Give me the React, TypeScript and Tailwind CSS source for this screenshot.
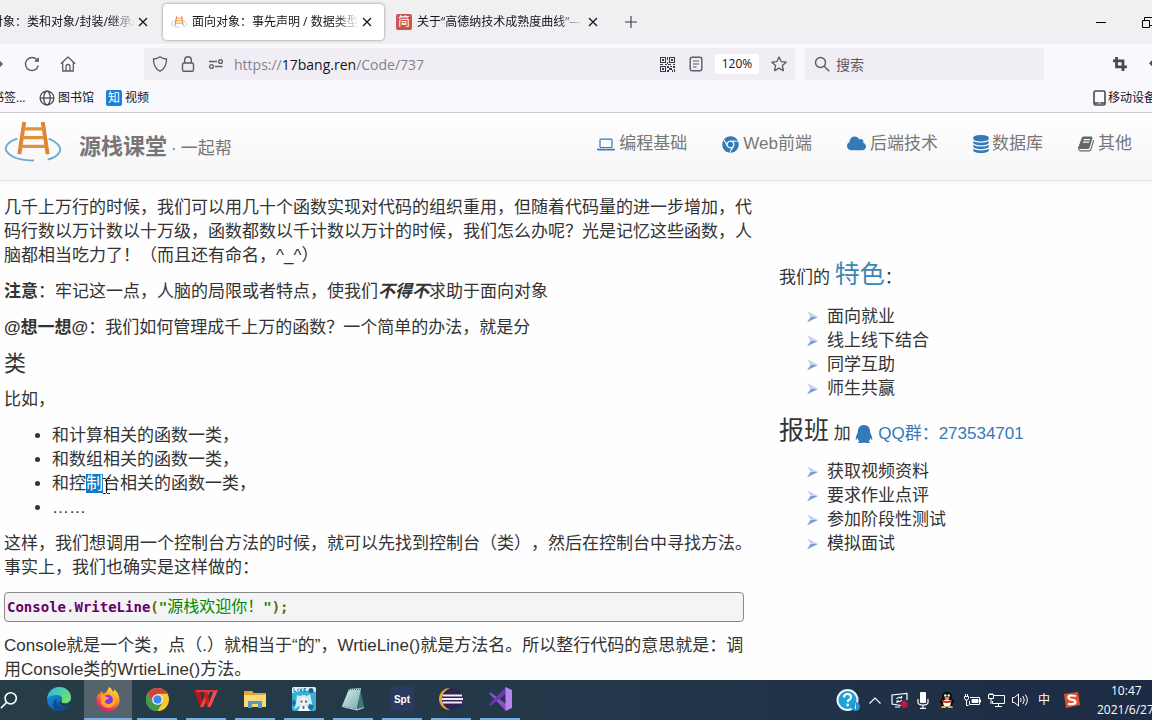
import React from "react";
import { FaChrome, FaQq } from "react-icons/fa";

const UI = "font-['Open_Sans','Noto_Sans_CJK_SC',sans-serif]";
const BODY = "font-['Liberation_Sans','Noto_Sans_CJK_SC',sans-serif]";

type IconProps = { className?: string };

/* ---------- small line icons ---------- */

function Cross() {
  return (
    <svg viewBox="0 0 10 10" className="size-[10px]" fill="none" stroke="#15141a" strokeWidth="1.2">
      <path d="M1 1l8 8M9 1l-8 8" />
    </svg>
  );
}

function Ladder({ className }: IconProps) {
  return (
    <svg viewBox="0 0 58 44" className={className} fill="none">
      <path d="M13 18C5 20-1 26 2 31c4 6 14 9.500 28 9.500" stroke="#6badd3" strokeWidth="2" />
      <path d="M45 18c9 4 14 9 11 14-2 4-6 6-12 7.500" stroke="#6badd3" strokeWidth="2" />
      <path d="M20 1l-5 33M39 1l5 33" stroke="#df8431" strokeWidth="4" />
      <path d="M19 8h21M18 17h23M17 26h25" stroke="#e38f40" strokeWidth="3.400" />
    </svg>
  );
}

function Shield() {
  return (
    <svg viewBox="0 0 16 16" className="size-4" fill="none" stroke="#5b5b66" strokeWidth="1.3">
      <path d="M8 .8c2 1.500 4.300 2.100 6.600 2.200 0 5.500-1.500 9.700-6.600 12.200C2.900 12.700 1.400 8.500 1.400 3 3.700 2.900 6 2.300 8 .8z" strokeLinejoin="round" />
    </svg>
  );
}

function Lock() {
  return (
    <svg viewBox="0 0 16 16" className="size-4" fill="none" stroke="#5b5b66" strokeWidth="1.4">
      <rect x="2.500" y="7" width="11" height="8.300" rx="1.500" />
      <path d="M4.700 7V4a3.300 3.300 0 016.600 0v3" />
    </svg>
  );
}

function Permissions() {
  return (
    <svg viewBox="0 0 16 16" className="size-4" fill="none" stroke="#5b5b66" strokeWidth="1.3">
      <path d="M1 5.500h8M7 10.500h7.500" />
      <circle cx="12.500" cy="5.500" r="1.900" />
      <circle cx="3.500" cy="10.500" r="1.900" />
    </svg>
  );
}

function Reload() {
  return (
    <svg viewBox="0 0 16 16" className="size-4" fill="none" stroke="#5b5b66" strokeWidth="1.4">
      <path d="M14.300 9.500A6.500 6.500 0 1112.800 3.600L14.500 5.300" />
      <path d="M14.800 1v4.800H10z" fill="#5b5b66" stroke="none" />
    </svg>
  );
}

function Home() {
  return (
    <svg viewBox="0 0 16 16" className="size-4" fill="none" stroke="#5b5b66" strokeWidth="1.3" strokeLinejoin="round">
      <path d="M.8 7.800L8 1l7.200 6.800M2.700 6.500V15h10.600V6.500" />
      <path d="M6 15v-4.500a2 2 0 014 0V15" />
    </svg>
  );
}

function QrCode() {
  return (
    <svg viewBox="0 0 15 15" className="size-[15px]" fill="#3a3944">
      <path fillRule="evenodd" d="M0 0h6v6H0zM1 1v4h4V1zM9 0h6v6H9zM10 1v4h4V1zM0 9h6v6H0zM1 10v4h4v-4z" />
      <path d="M2 2h2v2H2zM11 2h2v2h-2zM2 11h2v2H2zM7 0h1v3H7zM7 5h1v2H7zM0 7h3v1H0zM5 7h2v1H5zM8 7h3v1H8zM13 7h2v1h-2zM7 9h2v2H7zM10 9h2v1h-2zM13 9h2v2h-2zM9 11h3v2H9zM7 13h2v2H7zM12 13h1v2h-1zM14 12h1v3h-1z" />
    </svg>
  );
}

function Reader() {
  return (
    <svg viewBox="0 0 14 16" className="h-4 w-[14px]" fill="none" stroke="#5b5b66" strokeWidth="1.400">
      <rect x="1.200" y="1.200" width="11.600" height="13.600" rx="2" />
      <path d="M4 5h6M4 8h6M4 11h3.500" strokeWidth="1.200" />
    </svg>
  );
}

function Star() {
  return (
    <svg viewBox="0 0 16 16" className="size-4" fill="none" stroke="#5b5b66" strokeWidth="1.300" strokeLinejoin="round">
      <path d="M8 1l2.100 4.600 5 .6-3.700 3.400 1 5L8 12.100l-4.400 2.500 1-5L.9 6.200l5-.6z" />
    </svg>
  );
}

function Lens({ className, color }: { className?: string; color: string }) {
  return (
    <svg viewBox="0 0 16 16" className={className} fill="none" stroke={color} strokeWidth="1.400">
      <circle cx="6.500" cy="6.500" r="5" />
      <path d="M10.200 10.200l5 5" />
    </svg>
  );
}

function CropMark() {
  return (
    <svg viewBox="0 0 14 14" className="size-[14px]" fill="none" stroke="#4a4955" strokeWidth="2.800">
      <path d="M3.500 0v9.800H14M0 3.800h10V14" />
    </svg>
  );
}

function Globe() {
  return (
    <svg viewBox="0 0 16 16" className="size-4" fill="none" stroke="#4a4955" strokeWidth="1.300">
      <circle cx="8" cy="8" r="6.900" />
      <ellipse cx="8" cy="8" rx="3.200" ry="6.900" />
      <path d="M1.200 8h13.600" />
    </svg>
  );
}

/* ---------- navigation glyphs ---------- */

function Laptop() {
  return (
    <svg viewBox="0 0 1920 1792" className="h-[17px] w-[18px]" fill="#337ab7">
      <path d="M416 1280q-66 0-113-47t-47-113v-704q0-66 47-113t113-47h1088q66 0 113 47t47 113v704q0 66-47 113t-113 47h-1088zm-32-864v704q0 13 9.500 22.500t22.500 9.500h1088q13 0 22.500-9.500t9.500-22.500v-704q0-13-9.500-22.500t-22.500-9.500h-1088q-13 0-22.500 9.500t-9.500 22.500zm1376 928h160v96q0 40-47 68t-113 28h-1600q-66 0-113-28t-47-68v-96h1760zm-720 96q16 0 16-16t-16-16h-160q-16 0-16 16t16 16h160z" />
    </svg>
  );
}

function Cloud() {
  return (
    <svg viewBox="0 0 1920 1792" className="h-[18px] w-[19px]" fill="#337ab7">
      <path d="M1920 1152q0 159-112.500 271.500t-271.500 112.500h-1088q-185 0-316.500-131.500t-131.500-316.500q0-132 71-241.500t187-163.500q-2-28-2-43 0-212 150-362t362-150q158 0 286.500 88t187.500 230q70-62 166-62 106 0 181 75t75 181q0 75-41 138 129 30 213 134.500t84 239.500z" />
    </svg>
  );
}

function Database() {
  return (
    <svg viewBox="0 0 1536 1792" className="h-[18px] w-4" fill="#337ab7">
      <path d="M768 768q237 0 443-43t325-127v170q0 69-103 128t-280 93.500-385 34.500-385-34.500-280-93.500-103-128v-170q119 84 325 127t443 43zm0 768q237 0 443-43t325-127v170q0 69-103 128t-280 93.500-385 34.500-385-34.500-280-93.500-103-128v-170q119 84 325 127t443 43zm0-384q237 0 443-43t325-127v170q0 69-103 128t-280 93.500-385 34.500-385-34.500-280-93.500-103-128v-170q119 84 325 127t443 43zm0-1152q208 0 385 34.500t280 93.500 103 128v128q0 69-103 128t-280 93.500-385 34.500-385-34.500-280-93.500-103-128v-128q0-69 103-128t280-93.500 385-34.500z" />
    </svg>
  );
}

function Book() {
  return (
    <svg viewBox="0 0 1664 1792" className="h-[18px] w-4" fill="#666">
      <path d="M1639 478q40 57 18 129l-275 906q-19 64-76.500 107.500t-122.500 43.500h-923q-77 0-148.500-53.500t-99.500-131.500q-24-67-2-127 0-4 3-27t4-37q1-8-3-21.500t-3-19.500q2-11 8-21t16.500-23.500 16.500-23.500q23-38 45-91.500t30-91.500q3-10 .5-30t-.5-28q3-11 17-28t17-23q21-36 42-92t25-90q1-9-2.500-32t.5-28q4-13 22-30.500t22-22.500q19-26 42.500-84.500t27.500-96.500q1-8-3-25.500t-2-26.500q2-8 9-18t18-23 17-21q8-12 16.500-30.500t15-35 16-36 19.500-32 26.500-23.500 36-11.500 47.500 5.500l-1 3q38-9 51-9h761q74 0 114 56t18 130l-274 906q-36 119-71.500 153.500t-128.500 34.500h-869q-27 0-38 15-11 16-1 43 24 70 144 70h923q29 0 56-15.500t35-41.500l300-987q7-22 5-57 38 15 59 43zm-1064 2q-4 13 2 22.500t20 9.500h608q13 0 25.500-9.500t16.500-22.500l21-64q4-13-2-22.500t-20-9.500h-608q-13 0-25.500 9.500t-16.500 22.500zm-83 256q-4 13 2 22.500t20 9.500h608q13 0 25.500-9.500t16.500-22.500l21-64q4-13-2-22.500t-20-9.500h-608q-13 0-25.500 9.500t-16.500 22.500z" />
    </svg>
  );
}

/* ---------- browser chrome ---------- */

const FADE = "min-w-0 flex-1 overflow-hidden whitespace-nowrap [mask-image:linear-gradient(to_right,black_calc(100%-24px),transparent)]";

function TabStrip() {
  return (
    <div className="flex h-11 items-center bg-[#f0eff1] text-[12px] text-[#15141a]">
      <div className="flex w-[148px] items-center gap-[2px]">
        <div className={FADE}>
          <span className="-ml-[33px]">面向对象：类和对象/封装/继承/</span>
        </div>
        <button aria-label="关闭标签页" className="p-[1px] pr-0"><Cross /></button>
      </div>
      <div className="ml-[15px] flex h-9 w-[221px] items-center rounded-[4px] bg-white px-2 pr-3 shadow-[0_0_3px_rgba(0,0,0,0.45)]">
        <Ladder className="mr-[5px] h-3 w-4 shrink-0" />
        <div className={FADE}>面向对象：事先声明 / 数据类型</div>
        <button aria-label="关闭标签页" className="ml-[3px]"><Cross /></button>
      </div>
      <div className="ml-[12px] flex w-[202px] items-center">
        <span className="mr-[5px] flex size-4 shrink-0 items-center justify-center rounded-[2px] bg-[#cd5550] text-[12px] leading-4 text-white">简</span>
        <div className={FADE}>关于“高德纳技术成熟度曲线”—</div>
        <button aria-label="关闭标签页" className="ml-[6px]"><Cross /></button>
      </div>
      <button aria-label="新建标签页" className="ml-[27px]">
        <svg viewBox="0 0 12 12" className="size-3" stroke="#3a3944" strokeWidth="1.100"><path d="M6 0v12M0 6h12" /></svg>
      </button>
      <div className="ml-auto flex items-center gap-9 overflow-hidden">
        <button aria-label="最小化">
          <svg viewBox="0 0 10 10" className="size-[10px]" stroke="#000"><path d="M0 5.500h10" /></svg>
        </button>
        <button aria-label="还原" className="w-[10px] overflow-hidden">
          <svg viewBox="0 0 11 11" className="size-[11px]" fill="none" stroke="#000"><path d="M.5 3.500h7v7h-7zM2.500 3.500v-3h8v8h-3" /></svg>
        </button>
      </div>
    </div>
  );
}

function Toolbar() {
  return (
    <div className="flex h-10 items-center">
      <button aria-label="前进" className="w-1 overflow-hidden">
        <svg viewBox="0 0 4 12" className="h-3 w-1" fill="none" stroke="#5b5b66" strokeWidth="1.500"><path d="M-3 1l5 5-5 5M-3 6h5" /></svg>
      </button>
      <button aria-label="重新载入" className="ml-5"><Reload /></button>
      <button aria-label="主页" className="ml-5"><Home /></button>
      <div className="ml-[68px] flex h-8 min-w-0 flex-[635] items-center rounded-[3px] bg-[#f0eef4] px-2">
        <Shield />
        <span className="ml-3"><Lock /></span>
        <span className="ml-3"><Permissions /></span>
        <span className="ml-[10px] flex-1 text-[14px] text-[#83828c]">
          https://<span className="text-[#15141a]">17bang.ren</span>/Code/737
        </span>
        <QrCode />
        <span className="ml-[14px]"><Reader /></span>
        <button className="mx-3 h-5 w-11 rounded-[3px] bg-white text-[12px] leading-5 text-[#15141a]">120%</button>
        <button aria-label="添加书签"><Star /></button>
      </div>
      <label className="ml-[10px] flex h-8 min-w-0 flex-[230] items-center rounded-[3px] bg-[#f0eef4] pl-[9px]">
        <Lens className="mr-[6px] size-4 shrink-0" color="#5b5b66" />
        <input aria-label="搜索" placeholder="搜索" className="w-full min-w-0 bg-transparent text-[14px] outline-none placeholder:text-[#5b5b66]" />
      </label>
      <button aria-label="截图" className="ml-[69px]"><CropMark /></button>
      <button aria-label="撤销" className="ml-[22px]">
        <svg viewBox="0 0 4 12" className="h-3 w-[3px]" fill="#4a4955"><path d="M0 5l4-4v8z" /></svg>
      </button>
    </div>
  );
}

function Bookmarks() {
  return (
    <div className="flex h-[29px] items-center overflow-hidden whitespace-nowrap border-b border-[#cccbd2] text-[12px] text-[#15141a]">
      <a href="#b" className="w-[39px] overflow-hidden"><span className="-ml-2">书签...</span></a>
      <a href="#lib" className="flex items-center gap-[3px]"><Globe />图书馆</a>
      <a href="#video" className="ml-3 flex items-center gap-[3px]">
        <span className="flex size-4 items-center justify-center rounded-[2px] bg-[#1b7fdc] text-[12px] leading-4 text-white">知</span>视频
      </a>
      <a href="#mobile" className="ml-auto flex w-[59px] items-center gap-[2px] overflow-hidden">
        <svg viewBox="0 0 13 16" className="h-4 w-[13px] shrink-0" fill="none" stroke="#4a4955" strokeWidth="1.600">
          <rect x="1" y="1" width="11" height="14" rx="1.500" />
          <path d="M1 13h11" /><path d="M5.500 13h2" stroke="#fff" strokeWidth="1" />
        </svg>
        移动设备
      </a>
    </div>
  );
}

/* ---------- web page ---------- */

function NavItem({ icon, label, gap }: { icon: React.ReactNode; label: string; gap: string }) {
  return <a href="#nav" className={`flex items-center ${gap}`}>{icon}<span>{label}</span></a>;
}

function SiteHeader() {
  return (
    <header className="flex h-[68px] shrink-0 items-start border-b border-[#e6dfea] bg-linear-to-b from-white to-[#f6f5f7] pr-5 text-[17px] leading-6 text-[#777] shadow-[0_1px_4px_rgba(0,0,0,0.06)]">
      <a href="#home" className="flex items-start pl-1">
        <Ladder className="mt-[8px] h-[43px] w-[58px]" />
        <span className="mt-[22px] ml-[17px] flex items-baseline gap-1">
          <b className="text-[22px]">源栈课堂</b><span>·</span><span>一起帮</span>
        </span>
      </a>
      <nav className="mt-[19px] ml-auto flex gap-[35px]">
        <NavItem icon={<Laptop />} label="编程基础" gap="gap-1" />
        <NavItem icon={<FaChrome className="size-[17px] text-[#337ab7]" />} label="Web前端" gap="gap-1" />
        <NavItem icon={<Cloud />} label="后端技术" gap="gap-1" />
        <NavItem icon={<Database />} label="数据库" gap="gap-[3px]" />
        <NavItem icon={<Book />} label="其他" gap="gap-1" />
      </nav>
    </header>
  );
}

function Article() {
  return (
    <article className="flex flex-col gap-3">
      <p>几千上万行的时候，我们可以用几十个函数实现对代码的组织重用，但随着代码量的进一步增加，代码行数以万计数以十万级，函数都数以千计数以万计的时候，我们怎么办呢？光是记忆这些函数，人脑都相当吃力了！（而且还有命名，^_^）</p>
      <p><b>注意</b>：牢记这一点，人脑的局限或者特点，使我们<b><i>不得不</i></b>求助于面向对象</p>
      <p><b>@想一想@</b>：我们如何管理成千上万的函数？一个简单的办法，就是分</p>
      <h4 className="text-[22px]">类</h4>
      <p>比如，</p>
      <ul className="list-disc pl-12">
        <li>和计算相关的函数一类，</li>
        <li>和数组相关的函数一类，</li>
        <li>
          和控
          <span className="relative bg-[#0f7ac8] text-white">
            制
            <svg viewBox="0 0 7 16" className="absolute top-1 left-[17px] h-4 w-[7px]" fill="none" stroke="#111">
              <path d="M0 .5h2.500l1 1 1-1H7M3.500 1v14M0 15.500h2.500l1-1 1 1H7" />
            </svg>
          </span>
          台相关的函数一类，
        </li>
        <li>……</li>
      </ul>
      <p>这样，我们想调用一个控制台方法的时候，就可以先找到控制台（类），然后在控制台中寻找方法。事实上，我们也确实是这样做的：</p>
      <pre className="mr-[10px] rounded-[4px] border border-[#888] bg-[#f4f4f6] px-[2px] font-['DejaVu_Sans_Mono','Noto_Sans_CJK_SC',monospace] text-[14px] leading-7 font-bold text-[#660066]">
        Console<span className="text-[#666600]">.</span>WriteLine<span className="text-[#666600]">(</span>
        <span className="text-[#008800]">"<span className="text-[16px] leading-4 font-normal">源栈欢迎你！</span>"</span>
        <span className="text-[#666600]">);</span>
      </pre>
      <p>Console就是一个类，点（.）就相当于“的”，WrtieLine()就是方法名。所以整行代码的意思就是：调用Console类的WrtieLine()方法。</p>
    </article>
  );
}

function ArrowList({ items }: { items: string[] }) {
  return (
    <ul className="pl-7">
      {items.map((t) => (
        <li key={t} className="flex items-center gap-[9px]">
          <svg viewBox="0 0 11 12" className="h-3 w-[11px]">
            <path d="M0 0l11 6H3.500z" fill="#c3d4f3" />
            <path d="M0 11.500L11 6H3.500z" fill="#7d9cd6" />
          </svg>
          {t}
        </li>
      ))}
    </ul>
  );
}

function Sidebar() {
  return (
    <aside className="pt-[58px]">
      <p className="h-[51px] leading-10">我们的 <a href="#f" className="text-[25px] text-[#3d86b4]">特色</a>：</p>
      <ArrowList items={["面向就业", "线上线下结合", "同学互助", "师生共赢"]} />
      <p className="mt-[9px] h-[50px] leading-10">
        <span className="text-[25px]">报班</span> 加 <a href="#qq" className="text-[#337ab7]"><FaQq className="inline size-[18px] -translate-y-px scale-x-110" /> QQ群：273534701</a>
      </p>
      <ArrowList items={["获取视频资料", "要求作业点评", "参加阶段性测试", "模拟面试"]} />
    </aside>
  );
}

/* ---------- taskbar ---------- */

function Edge() {
  return (
    <svg viewBox="0 0 24 24" className="size-6">
      <defs>
        <linearGradient id="eg" x1="0" y1="0" x2="1" y2=".6"><stop offset="0" stopColor="#2fb1e8" /><stop offset="1" stopColor="#6fe36b" /></linearGradient>
        <linearGradient id="eb" x1="0" y1="0" x2=".6" y2="1"><stop offset="0" stopColor="#1c9be0" /><stop offset="1" stopColor="#0d59b0" /></linearGradient>
      </defs>
      <circle cx="12" cy="12" r="12" fill="url(#eb)" />
      <path d="M.4 11C1.500 4.500 6.500 0 12.500 0 19 0 24 5 24 10.500c0 4-3 6-6 6-2.500 0-4-1-3.500-2 2-3 0-6.500-4.500-6.500C5.500 8 2 9 .4 11z" fill="url(#eg)" />
      <path d="M9.500 12c-1 6 5 10 12.500 6-2 3.500-6 6-10 6-5 0-7-5-5.500-8.500C7.200 13.700 8 12.700 9.500 12z" fill="#114a8b" />
      <path d="M14.500 14.500c-.5 1 1 2 3.500 2 2 0 4-.8 5.200-2.500l.8 1.500-2 3c-5 2-10 0-10.500-4 1 .5 2 .5 3 0z" fill="#263c46" />
    </svg>
  );
}

function Firefox() {
  return (
    <svg viewBox="0 0 24 24" className="size-6">
      <defs>
        <linearGradient id="ff" x1=".8" y1="0" x2=".3" y2="1"><stop offset="0" stopColor="#fff04a" /><stop offset=".4" stopColor="#ff9a26" /><stop offset=".75" stopColor="#ff3b50" /><stop offset="1" stopColor="#e31587" /></linearGradient>
      </defs>
      <path d="M13 0c2 1 3.500 3 4 5 1-.5 1-1.500 1-2.500 3 2 5.500 6 5.500 10.500C23.500 19 18.500 24 12 24S.5 19 .5 13c0-3 1-5.500 2.500-7.500V8C4 6.500 5 6 5 4l2.500 2.500C9.500 6 11 5 13 0z" fill="url(#ff)" />
      <circle cx="12" cy="13" r="5" fill="#7a3ce0" />
      <path d="M4.500 8.500c2-1 4.500 0 5.500 1.500 1 0 3 0 3 1-1 2-3 1-4 3 0 3 4 4 6.500 2 2-1.500 2-5 0-7 4 1 5.500 6 2.500 9.500-4 4-11 2.500-13-2z" fill="#ffa62b" />
    </svg>
  );
}

function Chrome() {
  return (
    <svg viewBox="0 0 24 24" className="size-[23px]">
      <circle cx="12" cy="12" r="12" fill="#fcc934" />
      <path d="M1.600 6A12 12 0 0122.400 6H12L6.800 15z" fill="#c9463d" />
      <path d="M1.600 6A12 12 0 0012 24l5.200-9H6.800z" fill="#3d9b4f" />
      <circle cx="12" cy="12" r="5.600" fill="#fff" />
      <circle cx="12" cy="12" r="4.400" fill="#4285f4" />
    </svg>
  );
}

function Wps() {
  return (
    <svg viewBox="0 0 24 20" className="h-5 w-6">
      <path d="M0 1h6l3.500 17H6z" fill="#b3161b" /><path d="M6 18L13 2h3L9.500 18z" fill="#f04a43" />
      <path d="M9 1h4l3.500 17H13z" fill="#c81d21" /><path d="M13.500 18L20 1h4l-7.500 17z" fill="#f2504a" />
      <path d="M2 1h21l-.8 2H2.400z" fill="#e23a35" />
    </svg>
  );
}

function Folder() {
  return (
    <svg viewBox="0 0 22 19" className="h-[19px] w-[22px]">
      <path d="M0 1h8l2 2h12v4H0z" fill="#dda836" /><path d="M0 5h22v12H0z" fill="#fbd978" />
      <path d="M4 11h14v7h-4v-4H8v4H4z" fill="#519bc4" />
    </svg>
  );
}

function Live() {
  return (
    <svg viewBox="0 0 24 24" className="size-6">
      <rect width="24" height="24" rx="2" fill="#35b1d3" />
      <path d="M0 2q0-2 2-2h20q2 0 2 2v3Q12 2 0 6z" fill="#d9f3fa" />
      <path d="M2 1.500v3h2M6 1.500v3M8 1.500l1 3 1-3M14 1.500h-2v3h2M12 3h2" fill="none" stroke="#26809c" />
      <circle cx="19" cy="3.500" r="2.500" fill="#2c5b78" />
      <path d="M5 8l3 1q4-2 7 0l3-2 2 9q2 3-1 5l-4-2H7l-4 3q-2-4 1-6z" fill="#cfeaf5" />
      <path d="M7.500 12q4-3 8 0v4q-4 4-8 0z" fill="#fdf0ee" />
      <path d="M8.500 13.500h2v2h-2zM13 13.500h2v2h-2z" fill="#386a96" />
      <path d="M8 19h7l3 5H6z" fill="#fff" /><path d="M10.500 19h2v3h-2z" fill="#2b7fae" />
      <path d="M17 17l5 1-2 5-4-2zM1 12l3 3-1 5-3-3z" fill="#1f6f9f" />
    </svg>
  );
}

function Notepad() {
  return (
    <svg viewBox="0 0 24 24" className="size-6">
      <defs>
        <linearGradient id="np" x1="0" y1="0" x2="1" y2="1"><stop offset="0" stopColor="#e0f3f0" /><stop offset="1" stopColor="#6fa9a8" /></linearGradient>
      </defs>
      <path d="M19 1l4 19-6 2z" fill="#3d7679" />
      <path d="M8 2l12-1-4 21-15-3z" fill="url(#np)" />
      <path d="M8 3l12-1" stroke="#31595d" strokeDasharray="1 1" />
      <path d="M1 19l15 3 7-2v1l-7 2.500L1 20z" fill="#b8cfcf" />
    </svg>
  );
}

function Eclipse() {
  return (
    <svg viewBox="0 0 24 24" className="size-6">
      <path d="M11 1A11 11 0 0011 23Q3 19 3 12T11 1z" fill="#f0a02c" />
      <circle cx="13.500" cy="12" r="10.500" fill="#2d2353" />
      <path d="M3.500 8.500H23M3 12h21M3.500 15.500H23" stroke="#f1edf8" strokeWidth="1.800" />
    </svg>
  );
}

function VisualStudio() {
  return (
    <svg viewBox="0 0 24 24" className="size-6">
      <path d="M1 6.500l2-1L18 17v7z" fill="#8a4fc9" /><path d="M1 17.500l2 1L18 7V0z" fill="#6f35b0" />
      <path d="M17.500 0L24 3v18l-6.500 3z" fill="#b883ee" />
    </svg>
  );
}

function Task({ label, children, active, idle }: { label: string; children: React.ReactNode; active?: boolean; idle?: boolean }) {
  return (
    <button aria-label={label} className={`flex h-10 w-12 flex-col items-center ${active ? "bg-[#55646c]" : ""}`}>
      <span className="flex flex-1 items-center">{children}</span>
      <span className={`h-[2px] ${active ? "w-full" : "w-10"} ${idle ? "" : "bg-[#76b0e4]"}`} />
    </button>
  );
}

function Tray({ children }: { children: React.ReactNode }) {
  return <span className="flex w-6 items-center justify-center">{children}</span>;
}

function Taskbar() {
  return (
    <footer className={`flex h-10 shrink-0 items-center overflow-hidden bg-linear-to-r from-[#263c46] via-[#22384a] to-[#1d2a44] text-white ${UI}`}>
      <button aria-label="搜索" className="w-[34px]"><Lens className="size-[18px] -scale-x-100" color="#fff" /></button>
      <div className="ml-[1px] flex gap-[1px]">
        <Task label="Edge" idle><Edge /></Task>
        <Task label="Firefox" active><Firefox /></Task>
        <Task label="Chrome"><Chrome /></Task>
        <Task label="WPS"><Wps /></Task>
        <Task label="文件资源管理器"><Folder /></Task>
        <Task label="Live"><Live /></Task>
        <Task label="记事本"><Notepad /></Task>
        <Task label="Spt">
          <span className="flex size-6 items-center justify-center bg-[#2b3a5e] font-['Liberation_Sans',sans-serif] text-[10px] font-bold">Spt</span>
        </Task>
        <Task label="Eclipse"><Eclipse /></Task>
        <Task label="Visual Studio"><VisualStudio /></Task>
      </div>
      <div className="ml-auto flex items-center">
        <Tray>
          <svg viewBox="0 0 24 24" className="size-6">
            <circle cx="11.500" cy="12" r="11" fill="#eaf6fb" /><circle cx="11.500" cy="12" r="9" fill="#1fa0d6" />
            <path d="M8 9.500q0-3.500 3.500-3.500T15 9.200q0 1.600-1.800 2.600-1.500.8-1.500 2.200" fill="none" stroke="#fff" strokeWidth="2.200" /><circle cx="11.700" cy="17" r="1.400" fill="#fff" />
            <circle cx="19.500" cy="18.500" r="4.500" fill="#2c94cc" /><path d="M19.500 17.500v3.500M19.500 15.500v1" stroke="#fff" />
          </svg>
        </Tray>
        <span className="w-[3px]" />
        <Tray><svg viewBox="0 0 12 7" className="h-[7px] w-3" fill="none" stroke="#fff" strokeWidth="1.200"><path d="M.5 6.500L6 1l5.500 5.500" /></svg></Tray>
        <Tray>
          <svg viewBox="0 0 17 16" className="h-4 w-[17px]" fill="none" stroke="#fff" strokeWidth="1.200">
            <path d="M10 13.500L1 12V3l15-1.500V8M4 15h5" /><path d="M5.500 7q2-2.500 5-1M11 8q-2 2.500-5 1M10.500 4v2h-2M6 11V9h2" />
            <circle cx="13.200" cy="12.300" r="3.600" fill="#c01340" stroke="none" />
          </svg>
        </Tray>
        <Tray>
          <svg viewBox="0 0 12 17" className="h-[17px] w-3" fill="none" stroke="#fff" strokeWidth="1.200">
            <rect x="3" y="0" width="6" height="11" rx="1" fill="#fff" stroke="none" /><path d="M1 7v3.500q0 2.500 5 2.500t5-2.500V7M6 13v3M3 16.300h6" />
          </svg>
        </Tray>
        <Tray>
          <svg viewBox="0 0 16 16" className="size-4">
            <path d="M8 0c4 0 5 3 5 6l2.500 4-1.500 1-1 3H3l-1-3-1.500-1L3 6c0-3 1-6 5-6z" fill="#0b0b0d" />
            <ellipse cx="8" cy="11" rx="3.800" ry="3.800" fill="#fff" /><path d="M3 7.500q5 3 10 0v2q-5 3-10 0z" fill="#d8222a" />
            <circle cx="6.300" cy="3.500" r="1.200" fill="#fff" /><circle cx="9.700" cy="3.500" r="1.200" fill="#fff" />
            <ellipse cx="8" cy="6" rx="2.600" ry="1" fill="#f4a51c" /><path d="M3 14h4v2H2zM9 14h4l1 2H9z" fill="#f4a51c" />
          </svg>
        </Tray>
        <span className="w-px" />
        <Tray>
          <svg viewBox="0 0 17 12" className="h-3 w-[17px]" fill="none" stroke="#fff">
            <path d="M6 3.500h9.500v7H5.500V7M16.500 5.500v3M.5 2.500h4v2q0 1.500-2 1.500t-2-1.500zM1.500 0v2M3.500 0v2M2.500 6v5.500h2" /><path d="M8 5.500h6v3H8z" fill="#fff" />
          </svg>
        </Tray>
        <Tray>
          <svg viewBox="0 0 17 15" className="h-[15px] w-[17px]" fill="none" stroke="#fff">
            <path d="M6 2.500h10.500v8H4.500V8M10.500 10.500v3M7 13.500h7M.5 1.500h5v4h-5zM3 5.500V11M2 1.500V0M4 1.500V0" />
          </svg>
        </Tray>
        <Tray>
          <svg viewBox="0 0 17 14" className="h-[14px] w-[17px]" fill="none" stroke="#fff">
            <path d="M.5 4.500h2l4-3.500v12l-4-3.500h-2zM8.500 5q1.500 2 0 4M10.800 3q3 4 0 8M13.200 1.500q4.200 5.500 0 11" />
          </svg>
        </Tray>
        <Tray><span className="text-[12px]">中</span></Tray>
        <span className="w-1" />
        <Tray>
          <svg viewBox="0 0 16 16" className="size-4">
            <path d="M0 2l14-2 2 13-14 3z" fill="#e2502f" />
            <path d="M12 4Q4 2.500 4.500 5.500q0 2 3.500 2.300t3.500 2.500Q11 13 4 11.800" fill="none" stroke="#fff" strokeWidth="2.200" />
          </svg>
        </Tray>
        <div className="ml-[13px] w-[55px] text-[12px] leading-[19px] whitespace-nowrap">
          <div className="pl-[14px]">10:47</div>
          <div>2021/6/27</div>
        </div>
      </div>
    </footer>
  );
}

export default function App() {
  return (
    <div className="flex h-screen flex-col overflow-hidden bg-white [text-spacing-trim:space-all]">
      <div className={`shrink-0 bg-[#f9f8fd] ${UI}`}>
        <TabStrip />
        <Toolbar />
        <Bookmarks />
      </div>
      <div className={`flex min-h-0 flex-1 flex-col overflow-hidden bg-[#fefefe] text-[17px] leading-6 text-[#333] ${BODY}`}>
        <SiteHeader />
        <main className="grid grid-cols-[750fr_373fr] gap-x-[25px] pt-[15px] pl-1">
          <Article />
          <Sidebar />
        </main>
      </div>
      <Taskbar />
    </div>
  );
}
